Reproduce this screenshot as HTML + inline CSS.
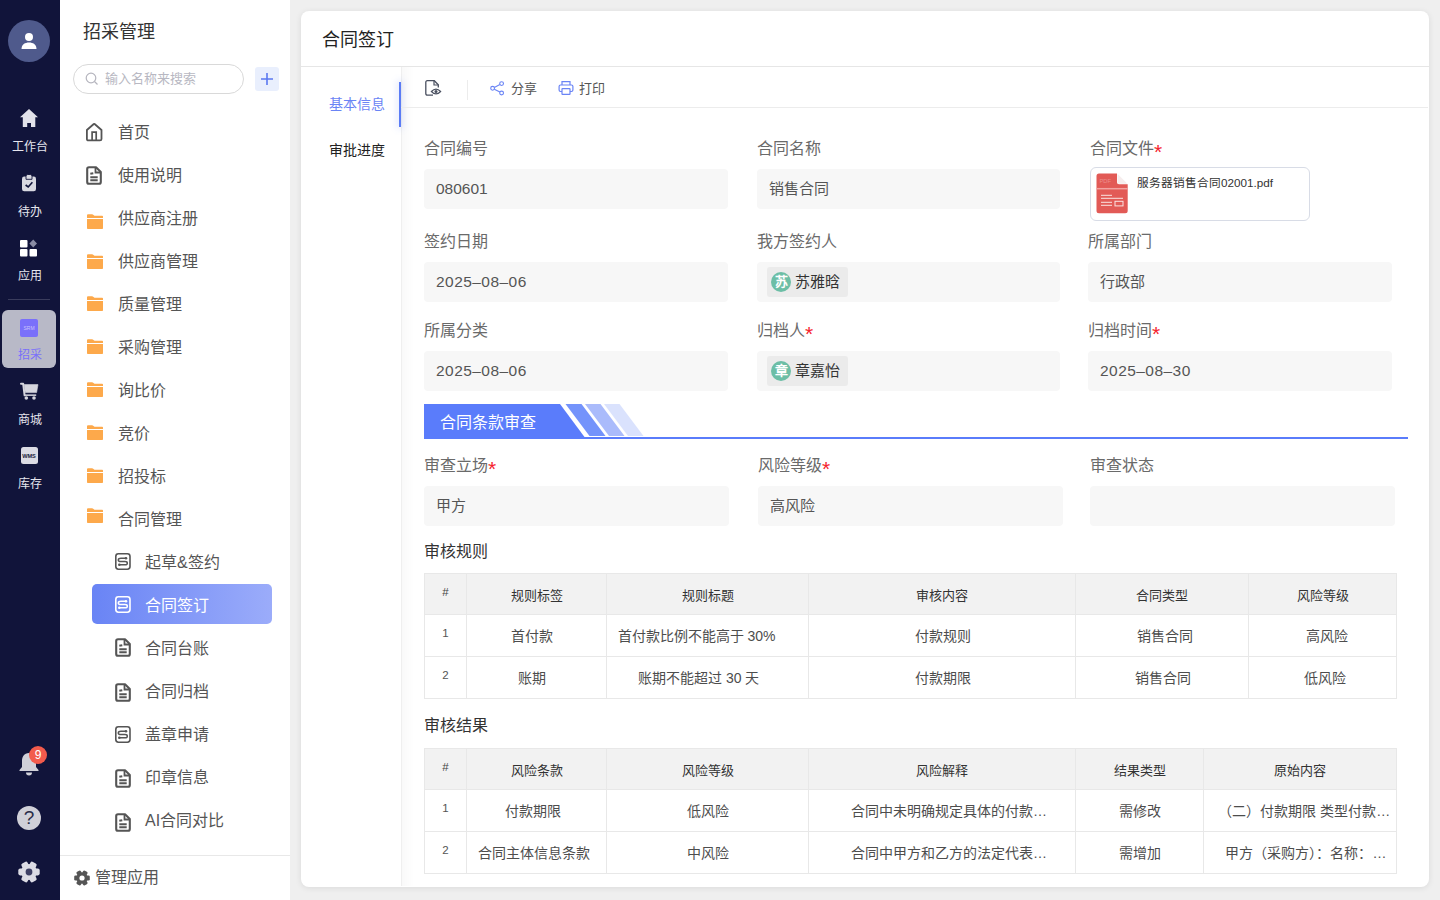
<!DOCTYPE html>
<html lang="zh-CN"><head><meta charset="utf-8">
<style>
*{margin:0;padding:0;box-sizing:border-box}
html,body{width:1440px;height:900px;overflow:hidden;background:#efefef;font-family:"Liberation Sans",sans-serif;color:#333}
.abs{position:absolute}
#nav{left:0;top:0;width:60px;height:900px;background:#11143a}
.navlbl{position:absolute;margin-top:1.5px;left:0;width:60px;text-align:center;font-size:12px;line-height:14px;color:#e6e6ee}
#side{left:60px;top:0;width:230px;height:900px;background:#fff}
.mi{position:absolute;left:0;width:230px;height:40px;font-size:16px;line-height:40px;color:#555}
.mi .ic{position:absolute;top:0}
.mi span{position:absolute;left:58px;top:1px}
.sub span{left:85px}
.active span{color:#fff}
#card{left:301px;top:11px;width:1128px;height:876px;background:#fff;border-radius:8px;box-shadow:0 1px 6px rgba(0,0,0,.09)}
.lbl{position:absolute;margin-top:1px;font-size:16px;line-height:20px;color:#6a6a6a;white-space:nowrap}
.lbl i{font-style:normal;color:#f5222d;font-size:21px;position:relative;top:4.5px;line-height:0}
.inp{position:absolute;height:40px;background:#f7f7f7;border-radius:4px;font-size:15px;line-height:40px;color:#555;padding-left:12px;white-space:nowrap}
.tag{position:absolute;left:10px;top:5px;height:30px;width:81px;background:#ebebeb;border-radius:3px}
.tag b{position:absolute;left:4px;top:5px;width:20px;height:20px;border-radius:10px;background:#6cbea6;color:#fff;font-weight:bold;font-size:13px;line-height:20px;text-align:center}
.tag span{position:absolute;left:28px;top:0;line-height:30px;font-size:15px;color:#333}
table{position:absolute;border-collapse:collapse;table-layout:fixed}
td,th{line-height:20px;border:1px solid #e8e8e8;text-align:center;white-space:nowrap;overflow:hidden}
th{background:#f2f2f2;font-weight:normal;font-size:13px;color:#333;height:41px}
td{font-size:14px;color:#4d4d4d;height:42px}
.num{font-size:11.5px;color:#555;position:relative;top:-3px}
th .num{top:-2px;color:#444}
.dt{font-size:15.5px;letter-spacing:0.45px}
.h3{position:absolute;font-size:16px;line-height:20px;color:#333;font-weight:500}
.hd{position:relative;top:1.5px}
</style></head><body>

<!-- dark nav -->
<div id="nav" class="abs">
  <div class="abs" style="left:8px;top:20px;width:42px;height:42px;border-radius:21px;background:#4f5a8c"></div>
  <svg class="abs" style="left:20px;top:32px" width="18" height="18" viewBox="0 0 18 18"><circle cx="9" cy="5" r="4" fill="#fff"/><path d="M1.5 17 C1.5 12.5 5 10.5 9 10.5 C13 10.5 16.5 12.5 16.5 17 Z" fill="#fff"/></svg>

  <svg class="abs" style="left:19px;top:108px" width="20" height="20" viewBox="0 0 20 20"><path d="M10 1 L19 9.3 H16.3 V19 H12 V15 H8.2 V19 H3.8 V9.3 H1 Z" fill="#e2e2ea"/></svg>
  <div class="navlbl" style="top:138px">工作台</div>

  <svg class="abs" style="left:21px;top:174px" width="16" height="18" viewBox="0 0 16 18"><rect x="1" y="2.5" width="14" height="14.8" rx="2.2" fill="#d9d9e1"/><path d="M5 5.3 V2.2 Q5 0.5 6.7 0.5 H9.3 Q11 0.5 11 2.2 V5.3 Z" fill="#d9d9e1" stroke="#11143a" stroke-width="0.9"/><path d="M4.6 11 L7.2 13 L11.4 8.2" stroke="#11143a" stroke-width="1.6" fill="none"/></svg>
  <div class="navlbl" style="top:203px">待办</div>

  <svg class="abs" style="left:20px;top:239px" width="18" height="18" viewBox="0 0 18 18"><rect x="0" y="1" width="7.5" height="7.5" rx="1" fill="#fff"/><rect x="0" y="10" width="7.5" height="7.5" rx="1" fill="#fff"/><rect x="9.5" y="10" width="7.5" height="7.5" rx="1" fill="#fff"/><path d="M13.2 0.5 L17 4.5 L13.2 8.5 L9.4 4.5 Z" fill="#8a8ca4"/></svg>
  <div class="navlbl" style="top:267px">应用</div>

  <div class="abs" style="left:8px;top:299px;width:42px;height:1px;background:#3a3c5c"></div>
  <div class="abs" style="left:2px;top:310px;width:54px;height:58px;border-radius:6px;background:#b8b9c7"></div>
  <div class="abs" style="left:20px;top:319px;width:18px;height:18px;border-radius:2px;background:#7a70fa;color:#c9c3fb;font-size:5px;line-height:18px;text-align:center">SRM</div>
  <div class="navlbl" style="top:346px;color:#7a70fa">招采</div>

  <svg class="abs" style="left:20px;top:382px" width="19" height="19" viewBox="0 0 19 19"><g fill="#d6d6de" stroke="#d6d6de"><path d="M1 1.8 H3.2 L4.6 13.3" fill="none" stroke-width="2" stroke-linecap="round" stroke-linejoin="round"/><path d="M4.2 2.6 H18 L16.6 10.6 H5.3 Z" stroke-width="0.6"/><rect x="4.6" y="12.4" width="11.6" height="1.5" stroke="none"/><circle cx="6.3" cy="16" r="1.8" stroke="none"/><circle cx="14" cy="16" r="1.8" stroke="none"/></g></svg>
  <div class="navlbl" style="top:411px">商城</div>

  <div class="abs" style="left:20.5px;top:446.5px;width:17px;height:17px;border-radius:2.5px;background:#dcdce4;color:#1a1c38;font-size:5.6px;font-weight:bold;line-height:18px;text-align:center">WMS</div>
  <div class="navlbl" style="top:475px">库存</div>

  <svg class="abs" style="left:18px;top:751px" width="22" height="25" viewBox="0 0 22 25"><path d="M11 2 C6 2 4 6 4 10 L4 16 L1.5 19 L1.5 20 L20.5 20 L20.5 19 L18 16 L18 10 C18 6 16 2 11 2 Z" fill="#d0d0d8"/><path d="M8 21.5 A3 3 0 0 0 14 21.5 Z" fill="#d0d0d8"/></svg>
  <div class="abs" style="left:29px;top:746px;width:18px;height:18px;border-radius:9px;background:#f25b4c;color:#fff;font-size:12px;line-height:18px;text-align:center">9</div>

  <div class="abs" style="left:17px;top:806px;width:24px;height:24px;border-radius:12px;background:#d0d0d8;color:#2a2c48;font-size:19px;font-weight:normal;line-height:24px;text-align:center">?</div>

  <svg class="abs" style="left:18px;top:861px" width="22" height="22" viewBox="0 0 22 22"><g fill="#dcdce4"><circle cx="11" cy="11" r="8"/><rect x="7.6" y="0.3" width="6.8" height="5" rx="1.8" transform="rotate(90 11 11)"/><rect x="7.6" y="0.3" width="6.8" height="5" rx="1.8" transform="rotate(150 11 11)"/><rect x="7.6" y="0.3" width="6.8" height="5" rx="1.8" transform="rotate(210 11 11)"/><rect x="7.6" y="0.3" width="6.8" height="5" rx="1.8" transform="rotate(270 11 11)"/><rect x="7.6" y="0.3" width="6.8" height="5" rx="1.8" transform="rotate(330 11 11)"/><rect x="7.6" y="0.3" width="6.8" height="5" rx="1.8" transform="rotate(30 11 11)"/></g><circle cx="11" cy="11" r="3.4" fill="#3e4064"/></svg>
</div>

<!-- secondary sidebar -->
<div id="side" class="abs">
  <div class="abs" style="left:23px;top:20px;font-size:18px;line-height:24px;color:#333">招采管理</div>
  <div class="abs" style="left:13px;top:64px;width:171px;height:30px;border:1px solid #d9d9d9;border-radius:15px"></div>
  <svg class="abs" style="left:25px;top:72px" width="14" height="14" viewBox="0 0 14 14"><circle cx="6" cy="6" r="4.8" fill="none" stroke="#b5b5be" stroke-width="1.2"/><path d="M9.5 9.5 L12.5 12.5" stroke="#b5b5be" stroke-width="1.2"/></svg>
  <div class="abs" style="left:45px;top:70px;font-size:13px;line-height:18px;color:#b8b8c2">输入名称来搜索</div>
  <div class="abs" style="left:195px;top:67px;width:24px;height:24px;border-radius:3px;background:#e9effd"></div>
  <svg class="abs" style="left:199px;top:71px" width="16" height="16" viewBox="0 0 16 16"><path d="M8 2 V14 M2 8 H14" stroke="#5b78f0" stroke-width="1.6"/></svg>
  <div class="abs" style="left:32px;top:584px;width:180px;height:40px;border-radius:5px;background:linear-gradient(90deg,#6984f5,#9bacfa)"></div>
<div class="mi" style="top:112px"><svg class="ic" style="left:26px;top:11px" width="18" height="19" viewBox="0 0 18 19"><path d="M0.9 7 L7.5 1.2 Q8.2 0.6 8.9 1.2 L15.5 7 V15.9 Q15.5 17.4 14 17.4 H2.4 Q0.9 17.4 0.9 15.9 Z" fill="none" stroke="#555" stroke-width="1.8" stroke-linejoin="round"/><path d="M6.1 17.4 V9.2 H10.2 V17.4" fill="none" stroke="#555" stroke-width="1.7"/></svg><span>首页</span></div>
<div class="mi" style="top:155px"><svg class="ic" style="left:26px;top:11px" width="16" height="19" viewBox="0 0 16 19"><path d="M3 1.2 L10 1.2 L14.8 6 L14.8 16 Q14.8 17.8 13 17.8 L3 17.8 Q1.2 17.8 1.2 16 L1.2 3 Q1.2 1.2 3 1.2 Z" fill="none" stroke="#555" stroke-width="2.1" stroke-linejoin="round"/><path d="M9.5 1.5 L9.5 6.5 L14.5 6.5" fill="none" stroke="#555" stroke-width="1.8"/><path d="M4.3 7.8 L7.3 7.2 M4.3 11.2 H11.7 M4.3 14.3 H11.7" stroke="#555" stroke-width="1.9"/></svg><span>使用说明</span></div>
<div class="mi" style="top:198px"><svg class="ic" style="left:27px;top:15.8px" width="16" height="15" viewBox="0 0 16 15"><path d="M0 1.2 Q0 0.2 1 0.2 L5 0.2 Q5.8 0.2 6.5 0.9 L7.5 1.8 L15.2 1.8 Q16 1.8 16 2.6 L16 4 L0 4 Z" fill="#fda94b"/><path d="M0 5 H16 V14.2 Q16 15 15.2 15 H0.8 Q0 15 0 14.2 Z" fill="#fda94b"/></svg><span>供应商注册</span></div>
<div class="mi" style="top:241px"><svg class="ic" style="left:27px;top:12.5px" width="16" height="15" viewBox="0 0 16 15"><path d="M0 1.2 Q0 0.2 1 0.2 L5 0.2 Q5.8 0.2 6.5 0.9 L7.5 1.8 L15.2 1.8 Q16 1.8 16 2.6 L16 4 L0 4 Z" fill="#fda94b"/><path d="M0 5 H16 V14.2 Q16 15 15.2 15 H0.8 Q0 15 0 14.2 Z" fill="#fda94b"/></svg><span>供应商管理</span></div>
<div class="mi" style="top:284px"><svg class="ic" style="left:27px;top:11.9px" width="16" height="15" viewBox="0 0 16 15"><path d="M0 1.2 Q0 0.2 1 0.2 L5 0.2 Q5.8 0.2 6.5 0.9 L7.5 1.8 L15.2 1.8 Q16 1.8 16 2.6 L16 4 L0 4 Z" fill="#fda94b"/><path d="M0 5 H16 V14.2 Q16 15 15.2 15 H0.8 Q0 15 0 14.2 Z" fill="#fda94b"/></svg><span>质量管理</span></div>
<div class="mi" style="top:327px"><svg class="ic" style="left:27px;top:11.7px" width="16" height="15" viewBox="0 0 16 15"><path d="M0 1.2 Q0 0.2 1 0.2 L5 0.2 Q5.8 0.2 6.5 0.9 L7.5 1.8 L15.2 1.8 Q16 1.8 16 2.6 L16 4 L0 4 Z" fill="#fda94b"/><path d="M0 5 H16 V14.2 Q16 15 15.2 15 H0.8 Q0 15 0 14.2 Z" fill="#fda94b"/></svg><span>采购管理</span></div>
<div class="mi" style="top:370px"><svg class="ic" style="left:27px;top:11.7px" width="16" height="15" viewBox="0 0 16 15"><path d="M0 1.2 Q0 0.2 1 0.2 L5 0.2 Q5.8 0.2 6.5 0.9 L7.5 1.8 L15.2 1.8 Q16 1.8 16 2.6 L16 4 L0 4 Z" fill="#fda94b"/><path d="M0 5 H16 V14.2 Q16 15 15.2 15 H0.8 Q0 15 0 14.2 Z" fill="#fda94b"/></svg><span>询比价</span></div>
<div class="mi" style="top:413px"><svg class="ic" style="left:27px;top:11.6px" width="16" height="15" viewBox="0 0 16 15"><path d="M0 1.2 Q0 0.2 1 0.2 L5 0.2 Q5.8 0.2 6.5 0.9 L7.5 1.8 L15.2 1.8 Q16 1.8 16 2.6 L16 4 L0 4 Z" fill="#fda94b"/><path d="M0 5 H16 V14.2 Q16 15 15.2 15 H0.8 Q0 15 0 14.2 Z" fill="#fda94b"/></svg><span>竞价</span></div>
<div class="mi" style="top:456px"><svg class="ic" style="left:27px;top:11.9px" width="16" height="15" viewBox="0 0 16 15"><path d="M0 1.2 Q0 0.2 1 0.2 L5 0.2 Q5.8 0.2 6.5 0.9 L7.5 1.8 L15.2 1.8 Q16 1.8 16 2.6 L16 4 L0 4 Z" fill="#fda94b"/><path d="M0 5 H16 V14.2 Q16 15 15.2 15 H0.8 Q0 15 0 14.2 Z" fill="#fda94b"/></svg><span>招投标</span></div>
<div class="mi" style="top:499px"><svg class="ic" style="left:27px;top:8.8px" width="16" height="15" viewBox="0 0 16 15"><path d="M0 1.2 Q0 0.2 1 0.2 L5 0.2 Q5.8 0.2 6.5 0.9 L7.5 1.8 L15.2 1.8 Q16 1.8 16 2.6 L16 4 L0 4 Z" fill="#fda94b"/><path d="M0 5 H16 V14.2 Q16 15 15.2 15 H0.8 Q0 15 0 14.2 Z" fill="#fda94b"/></svg><span>合同管理</span></div>
<div class="mi sub" style="top:542px"><svg class="ic" style="left:55px;top:11px" width="16" height="17" viewBox="0 0 16 17"><rect x="0.8" y="0.8" width="14.2" height="15.4" rx="2.6" fill="none" stroke="#555" stroke-width="1.6"/><path d="M11 5.2 H6 Q3.3 5.2 3.3 6.9 Q3.3 8.6 6 8.6 H10 Q12.3 8.6 12.3 10.2 Q12.3 11.8 10 11.8 H4.5" fill="none" stroke="#555" stroke-width="1.5"/><circle cx="11" cy="5.2" r="1.3" fill="#555"/><circle cx="4.3" cy="11.8" r="1.3" fill="#555"/></svg><span>起草&签约</span></div>
<div class="mi sub active" style="top:585px"><svg class="ic" style="left:55px;top:10.5px" width="16" height="17" viewBox="0 0 16 17"><rect x="0.8" y="0.8" width="14.2" height="15.4" rx="2.6" fill="none" stroke="#fff" stroke-width="1.6"/><path d="M11 5.2 H6 Q3.3 5.2 3.3 6.9 Q3.3 8.6 6 8.6 H10 Q12.3 8.6 12.3 10.2 Q12.3 11.8 10 11.8 H4.5" fill="none" stroke="#fff" stroke-width="1.5"/><circle cx="11" cy="5.2" r="1.3" fill="#fff"/><circle cx="4.3" cy="11.8" r="1.3" fill="#fff"/></svg><span>合同签订</span></div>
<div class="mi sub" style="top:628px"><svg class="ic" style="left:55px;top:9.9px" width="16" height="19" viewBox="0 0 16 19"><path d="M3 1.2 L10 1.2 L14.8 6 L14.8 16 Q14.8 17.8 13 17.8 L3 17.8 Q1.2 17.8 1.2 16 L1.2 3 Q1.2 1.2 3 1.2 Z" fill="none" stroke="#555" stroke-width="2.1" stroke-linejoin="round"/><path d="M9.5 1.5 L9.5 6.5 L14.5 6.5" fill="none" stroke="#555" stroke-width="1.8"/><path d="M4.3 7.8 L7.3 7.2 M4.3 11.2 H11.7 M4.3 14.3 H11.7" stroke="#555" stroke-width="1.9"/></svg><span>合同台账</span></div>
<div class="mi sub" style="top:671px"><svg class="ic" style="left:55px;top:12.2px" width="16" height="19" viewBox="0 0 16 19"><path d="M3 1.2 L10 1.2 L14.8 6 L14.8 16 Q14.8 17.8 13 17.8 L3 17.8 Q1.2 17.8 1.2 16 L1.2 3 Q1.2 1.2 3 1.2 Z" fill="none" stroke="#555" stroke-width="2.1" stroke-linejoin="round"/><path d="M9.5 1.5 L9.5 6.5 L14.5 6.5" fill="none" stroke="#555" stroke-width="1.8"/><path d="M4.3 7.8 L7.3 7.2 M4.3 11.2 H11.7 M4.3 14.3 H11.7" stroke="#555" stroke-width="1.9"/></svg><span>合同归档</span></div>
<div class="mi sub" style="top:714px"><svg class="ic" style="left:55px;top:12px" width="16" height="17" viewBox="0 0 16 17"><rect x="0.8" y="0.8" width="14.2" height="15.4" rx="2.6" fill="none" stroke="#555" stroke-width="1.6"/><path d="M11 5.2 H6 Q3.3 5.2 3.3 6.9 Q3.3 8.6 6 8.6 H10 Q12.3 8.6 12.3 10.2 Q12.3 11.8 10 11.8 H4.5" fill="none" stroke="#555" stroke-width="1.5"/><circle cx="11" cy="5.2" r="1.3" fill="#555"/><circle cx="4.3" cy="11.8" r="1.3" fill="#555"/></svg><span>盖章申请</span></div>
<div class="mi sub" style="top:757px"><svg class="ic" style="left:55px;top:12.1px" width="16" height="19" viewBox="0 0 16 19"><path d="M3 1.2 L10 1.2 L14.8 6 L14.8 16 Q14.8 17.8 13 17.8 L3 17.8 Q1.2 17.8 1.2 16 L1.2 3 Q1.2 1.2 3 1.2 Z" fill="none" stroke="#555" stroke-width="2.1" stroke-linejoin="round"/><path d="M9.5 1.5 L9.5 6.5 L14.5 6.5" fill="none" stroke="#555" stroke-width="1.8"/><path d="M4.3 7.8 L7.3 7.2 M4.3 11.2 H11.7 M4.3 14.3 H11.7" stroke="#555" stroke-width="1.9"/></svg><span>印章信息</span></div>
<div class="mi sub" style="top:800px"><svg class="ic" style="left:55px;top:12.7px" width="16" height="19" viewBox="0 0 16 19"><path d="M3 1.2 L10 1.2 L14.8 6 L14.8 16 Q14.8 17.8 13 17.8 L3 17.8 Q1.2 17.8 1.2 16 L1.2 3 Q1.2 1.2 3 1.2 Z" fill="none" stroke="#555" stroke-width="2.1" stroke-linejoin="round"/><path d="M9.5 1.5 L9.5 6.5 L14.5 6.5" fill="none" stroke="#555" stroke-width="1.8"/><path d="M4.3 7.8 L7.3 7.2 M4.3 11.2 H11.7 M4.3 14.3 H11.7" stroke="#555" stroke-width="1.9"/></svg><span>AI合同对比</span></div>
  <div class="abs" style="left:0;top:855px;width:230px;height:1px;background:#e8e8e8"></div>
  <svg class="abs" style="left:14px;top:870px" width="16" height="16" viewBox="0 0 22 22"><g fill="#555"><circle cx="11" cy="11" r="8"/><rect x="7.6" y="0.3" width="6.8" height="5" rx="1.8" transform="rotate(90 11 11)"/><rect x="7.6" y="0.3" width="6.8" height="5" rx="1.8" transform="rotate(150 11 11)"/><rect x="7.6" y="0.3" width="6.8" height="5" rx="1.8" transform="rotate(210 11 11)"/><rect x="7.6" y="0.3" width="6.8" height="5" rx="1.8" transform="rotate(270 11 11)"/><rect x="7.6" y="0.3" width="6.8" height="5" rx="1.8" transform="rotate(330 11 11)"/><rect x="7.6" y="0.3" width="6.8" height="5" rx="1.8" transform="rotate(30 11 11)"/></g><circle cx="11" cy="11" r="3.6" fill="#fff"/></svg>
  <div class="abs" style="left:35px;top:865.7px;font-size:16px;line-height:24px;color:#555">管理应用</div>
</div>

<!-- main card -->
<div id="card" class="abs"></div>
<div class="abs" style="left:322px;top:27.5px;font-size:18px;line-height:24px;color:#222">合同签订</div>
<div class="abs" style="left:301px;top:66px;width:1128px;height:1px;background:#e6e6e6"></div>
<div class="abs" style="left:329px;top:94px;font-size:14px;line-height:20px;color:#6a84f5">基本信息</div>
<div class="abs" style="left:329px;top:140px;font-size:14px;line-height:20px;color:#222;font-weight:500">审批进度</div>
<div class="abs" style="left:401px;top:67px;width:1px;height:819px;background:#efefef"></div>
<div class="abs" style="left:402px;top:67px;width:12px;height:819px;background:linear-gradient(90deg,rgba(0,0,0,.025),rgba(0,0,0,0))"></div>
<div class="abs" style="left:399px;top:82px;width:2px;height:45px;background:#5b7cf5;box-shadow:0 0 7px 2px rgba(106,132,245,.18)"></div>
<div class="abs" style="left:401px;top:107px;width:1027px;height:1px;background:#ececec"></div>
<svg class="abs" style="left:425px;top:80px" width="17" height="17" viewBox="0 0 17 17"><path d="M8 15.2 H2.4 Q0.8 15.2 0.8 13.6 V2.3 Q0.8 0.7 2.4 0.7 H9.3 L13.3 4.8 V7.4" fill="none" stroke="#4a5060" stroke-width="1.3"/><path d="M9 0.8 V5 H13.3" fill="none" stroke="#4a5060" stroke-width="1.2"/><path d="M6.4 11.5 Q11 6.6 15.6 11.5 Q11 16.4 6.4 11.5 Z" fill="#fff" stroke="#4a5060" stroke-width="1.2"/><circle cx="11" cy="11.5" r="1.5" fill="#4a5060"/></svg>
<div class="abs" style="left:467px;top:80px;width:1px;height:20px;background:#ececec"></div>
<svg class="abs" style="left:490px;top:81px" width="15" height="15" viewBox="0 0 15 15"><circle cx="11.6" cy="2.6" r="1.9" fill="none" stroke="#6a84f5" stroke-width="1.1"/><circle cx="2.6" cy="7.3" r="1.9" fill="none" stroke="#6a84f5" stroke-width="1.1"/><circle cx="11.6" cy="12" r="1.9" fill="none" stroke="#6a84f5" stroke-width="1.1"/><path d="M4.3 6.4 L9.9 3.5 M4.3 8.2 L9.9 11.1" stroke="#6a84f5" stroke-width="1.1"/></svg>
<div class="abs" style="left:511px;top:80px;font-size:13px;line-height:18px;color:#555">分享</div>
<svg class="abs" style="left:558px;top:80px" width="16" height="16" viewBox="0 0 16 16"><path d="M4 5 V1.6 H12 V5" fill="none" stroke="#6a84f5" stroke-width="1.2"/><path d="M4 11.5 H2.5 Q1.1 11.5 1.1 10.1 V6.4 Q1.1 5 2.5 5 H13.5 Q14.9 5 14.9 6.4 V10.1 Q14.9 11.5 13.5 11.5 H12" fill="none" stroke="#6a84f5" stroke-width="1.2"/><rect x="4" y="8.6" width="8" height="5.8" rx="0.5" fill="none" stroke="#6a84f5" stroke-width="1.2"/></svg>
<div class="abs" style="left:579px;top:80px;font-size:13px;line-height:18px;color:#555">打印</div>
<div class="lbl" style="left:424px;top:138px">合同编号</div>
<div class="inp" style="left:424px;top:169px;width:304px"><span class="dt" style="letter-spacing:0">080601</span></div>
<div class="lbl" style="left:757px;top:138px">合同名称</div>
<div class="inp" style="left:757px;top:169px;width:303px">销售合同</div>
<div class="lbl" style="left:1090px;top:138px">合同文件<i>*</i></div>
<div class="abs" style="left:1090px;top:167px;width:220px;height:54px;border:1px solid #d8dce6;border-radius:6px;background:#fff"></div>
<svg class="abs" style="left:1096px;top:173px" width="33" height="41" viewBox="0 0 33 41"><path d="M3 0.5 H21 V9.3 Q21 11.3 23 11.3 H31.7 V37.8 Q31.7 40.3 29.2 40.3 H3 Q0.5 40.3 0.5 37.8 V3 Q0.5 0.5 3 0.5 Z" fill="#e25a56"/><path d="M21.5 0.8 L31.4 10.8 H23 Q21.5 10.8 21.5 9.3 Z" fill="#f6eded"/><text x="3.5" y="9.5" font-size="5.8" fill="#ec8f8c" font-family="Liberation Sans">PDF</text><path d="M0.5 15.7 H31.7" stroke="#f2a3a1" stroke-width="1.5"/><path d="M5 22.3 H16 M5 25.3 H27 M5 29.3 H16 M5 32.3 H16" stroke="#fbe3e2" stroke-width="1"/><rect x="19" y="28.3" width="8" height="4.6" fill="none" stroke="#fbe3e2" stroke-width="1"/></svg>
<div class="abs" style="left:1137px;top:175px;font-size:11.7px;line-height:16px;color:#333">服务器销售合同02001.pdf</div>
<div class="lbl" style="left:424px;top:231px">签约日期</div>
<div class="inp" style="left:424px;top:262px;width:304px"><span class="dt">2025–08–06</span></div>
<div class="lbl" style="left:757px;top:231px">我方签约人</div>
<div class="inp" style="left:757px;top:262px;width:303px"><div class="tag"><b>苏</b><span>苏雅晗</span></div></div>
<div class="lbl" style="left:1088px;top:231px">所属部门</div>
<div class="inp" style="left:1088px;top:262px;width:304px">行政部</div>
<div class="lbl" style="left:424px;top:320px">所属分类</div>
<div class="inp" style="left:424px;top:351px;width:304px"><span class="dt">2025–08–06</span></div>
<div class="lbl" style="left:757px;top:320px">归档人<i>*</i></div>
<div class="inp" style="left:757px;top:351px;width:303px"><div class="tag"><b>章</b><span>章嘉怡</span></div></div>
<div class="lbl" style="left:1088px;top:320px">归档时间<i>*</i></div>
<div class="inp" style="left:1088px;top:351px;width:304px"><span class="dt">2025–08–30</span></div>
<div class="abs" style="left:424px;top:437px;width:984px;height:2px;background:#5a7cfb"></div>
<svg class="abs" style="left:424px;top:404px" width="230" height="34" viewBox="0 0 230 34"><path d="M0 0 H136 L160.5 33 H0 Z" fill="#5a7cfb"/><path d="M141.5 0 H157.5 L181.5 32 H165.5 Z" fill="#7493fb"/><path d="M161 0 H176.5 L200.5 32 H185 Z" fill="#aabbfb"/><path d="M180 0 H195.5 L219.5 32 H204 Z" fill="#dae2fd"/></svg>
<div class="abs" style="left:440px;top:412px;font-size:16px;line-height:22px;color:#fff;font-weight:500">合同条款审查</div>
<div class="lbl" style="left:424px;top:455px">审查立场<i>*</i></div>
<div class="inp" style="left:424px;top:486px;width:305px">甲方</div>
<div class="lbl" style="left:758px;top:455px">风险等级<i>*</i></div>
<div class="inp" style="left:758px;top:486px;width:305px">高风险</div>
<div class="lbl" style="left:1090px;top:455px">审查状态</div>
<div class="inp" style="left:1090px;top:486px;width:305px"></div>
<div class="h3" style="left:424px;top:541.5px">审核规则</div>
<div class="h3" style="left:424px;top:716px">审核结果</div>
<table style="left:424px;top:573px;width:972px"><colgroup><col style="width:42px"><col style="width:140px"><col style="width:202px"><col style="width:267px"><col style="width:173px"><col style="width:148px"></colgroup><tr><th><span class=num>#</span></th><th><span class=hd>规则标签</span></th><th><span class=hd>规则标题</span></th><th><span class=hd>审核内容</span></th><th><span class=hd>合同类型</span></th><th><span class=hd>风险等级</span></th></tr><tr><td><span class=num>1</span></td><td><span style=position:relative;left:-4.4px>首付款</span></td><td><span style=position:relative;left:-11px>首付款比例不能高于 30%</span></td><td><span style=position:relative;left:0.6px>付款规则</span></td><td><span style=position:relative;left:2.5px>销售合同</span></td><td><span style=position:relative;left:4.6px>高风险</span></td></tr><tr><td><span class=num>2</span></td><td><span style=position:relative;left:-4.5px>账期</span></td><td><span style=position:relative;left:-8.7px>账期不能超过 30 天</span></td><td><span style=position:relative;left:0.6px>付款期限</span></td><td><span style=position:relative;left:0.9px>销售合同</span></td><td><span style=position:relative;left:2.4px>低风险</span></td></tr></table>
<table style="left:424px;top:748px;width:972px"><colgroup><col style="width:42px"><col style="width:140px"><col style="width:202px"><col style="width:267px"><col style="width:128px"><col style="width:193px"></colgroup><tr><th><span class=num>#</span></th><th><span class=hd>风险条款</span></th><th><span class=hd>风险等级</span></th><th><span class=hd>风险解释</span></th><th><span class=hd>结果类型</span></th><th><span class=hd>原始内容</span></th></tr><tr><td><span class=num>1</span></td><td><span style=position:relative;left:-3.8px>付款期限</span></td><td><span style=position:relative;left:0px>低风险</span></td><td><span style=position:relative;left:7px>合同中未明确规定具体的付款…</span></td><td><span style=position:relative;left:0.6px>需修改</span></td><td><span style=position:relative;left:4.4px>（二）付款期限 类型付款…</span></td></tr><tr><td><span class=num>2</span></td><td><span style=position:relative;left:-2.1px>合同主体信息条款</span></td><td><span style=position:relative;left:0px>中风险</span></td><td><span style=position:relative;left:7px>合同中甲方和乙方的法定代表…</span></td><td><span style=position:relative;left:0.6px>需增加</span></td><td><span style=position:relative;left:5.9px>甲方（采购方）：名称：…</span></td></tr></table>

</body></html>
